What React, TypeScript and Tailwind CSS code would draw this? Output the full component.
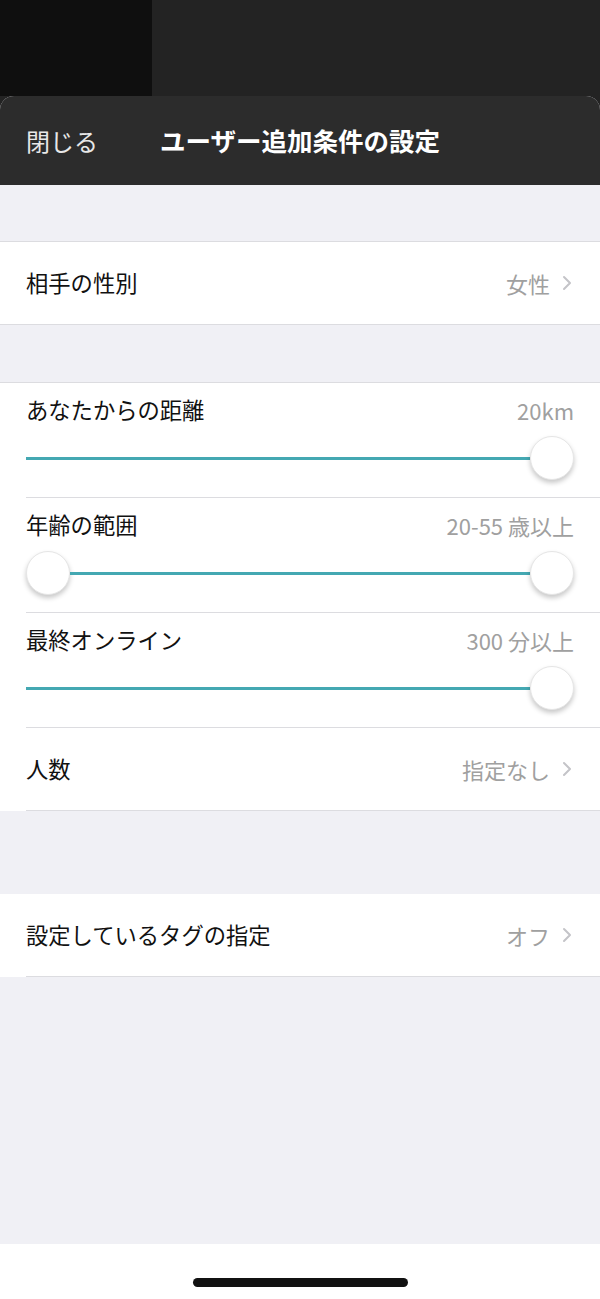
import React from 'react'

const font = { fontFamily: '"Noto Sans CJK JP", "Noto Sans", sans-serif' }

function Chevron() {
  return (
    <svg width="10" height="16" viewBox="0 0 10 16" className="ml-3">
      <path d="M2 2l6 6-6 6" fill="none" stroke="#c4c4c8" strokeWidth="2" strokeLinecap="round" strokeLinejoin="round" />
    </svg>
  )
}

function NavRow({ label, value, last }: { label: string; value: string; last?: boolean }) {
  return (
    <div className={`ml-[26px] h-[82px] flex items-center pr-[28px] ${last ? 'border-b border-[#dcdce0] h-[83px]' : ''}`}>
      <span className="text-[22.3px] text-[#111]">{label}</span>
      <span className="ml-auto text-[22px] text-[#a0a0a0]">{value}</span>
      <Chevron />
    </div>
  )
}

function Thumb() {
  return <div className="w-[44px] h-[44px] rounded-full bg-white border border-[#e6e6e6] shadow-[0_3px_5px_rgba(0,0,0,0.22)] shrink-0" />
}

function SliderRow({ label, value, range }: { label: string; value: string; range?: boolean }) {
  return (
    <div className="ml-[26px] pr-[26px] pt-[13px] pb-[17px] border-b border-[#dcdce0]">
      <div className="flex items-center h-[28px]">
        <span className="text-[22.3px] text-[#111]">{label}</span>
        <span className="ml-auto text-[22px] text-[#a0a0a0]">{value}</span>
      </div>
      <div className="mt-[12px] flex items-center h-[44px]">
        {range && <Thumb />}
        <div className="flex-1 h-[3px] bg-[#44a8b2]" />
        <Thumb />
      </div>
    </div>
  )
}

export default function App() {
  return (
    <div className="w-[600px] h-[1299px] flex flex-col bg-[#232323] overflow-hidden" style={font}>
      {/* status area behind the sheet */}
      <div className="h-[96px] flex shrink-0">
        <div className="w-[152px] bg-[#0f0f0f]" />
        <div className="flex-1 bg-[#232323]" />
      </div>

      {/* sheet */}
      <div className="flex-1 flex flex-col rounded-t-[14px] overflow-hidden bg-[#f0f0f5]">
        <div className="h-[89px] bg-[#2c2c2c] flex items-center px-[26px] shrink-0">
          <span className="text-[24px] text-[#e8e8e8] w-[134px]">閉じる</span>
          <span className="text-[25.5px] font-bold text-white">ユーザー追加条件の設定</span>
        </div>

        <div className="h-[56px] shrink-0" />

        <div className="bg-white border-y border-[#dcdce0]">
          <NavRow label="相手の性別" value="女性" />
        </div>

        <div className="h-[57px] shrink-0" />

        <div className="bg-white border-t border-[#dcdce0]">
          <SliderRow label="あなたからの距離" value="20km" />
          <SliderRow label="年齢の範囲" value="20-55 歳以上" range />
          <SliderRow label="最終オンライン" value="300 分以上" />
          <NavRow label="人数" value="指定なし" last />
        </div>

        <div className="h-[83px] shrink-0" />

        <div className="bg-white">
          <NavRow label="設定しているタグの指定" value="オフ" last />
        </div>

        <div className="flex-1" />

        <div className="h-[55px] bg-white flex justify-center shrink-0">
          <div className="mt-[34px] w-[215px] h-[9px] rounded-full bg-[#111]" />
        </div>
      </div>
    </div>
  )
}
